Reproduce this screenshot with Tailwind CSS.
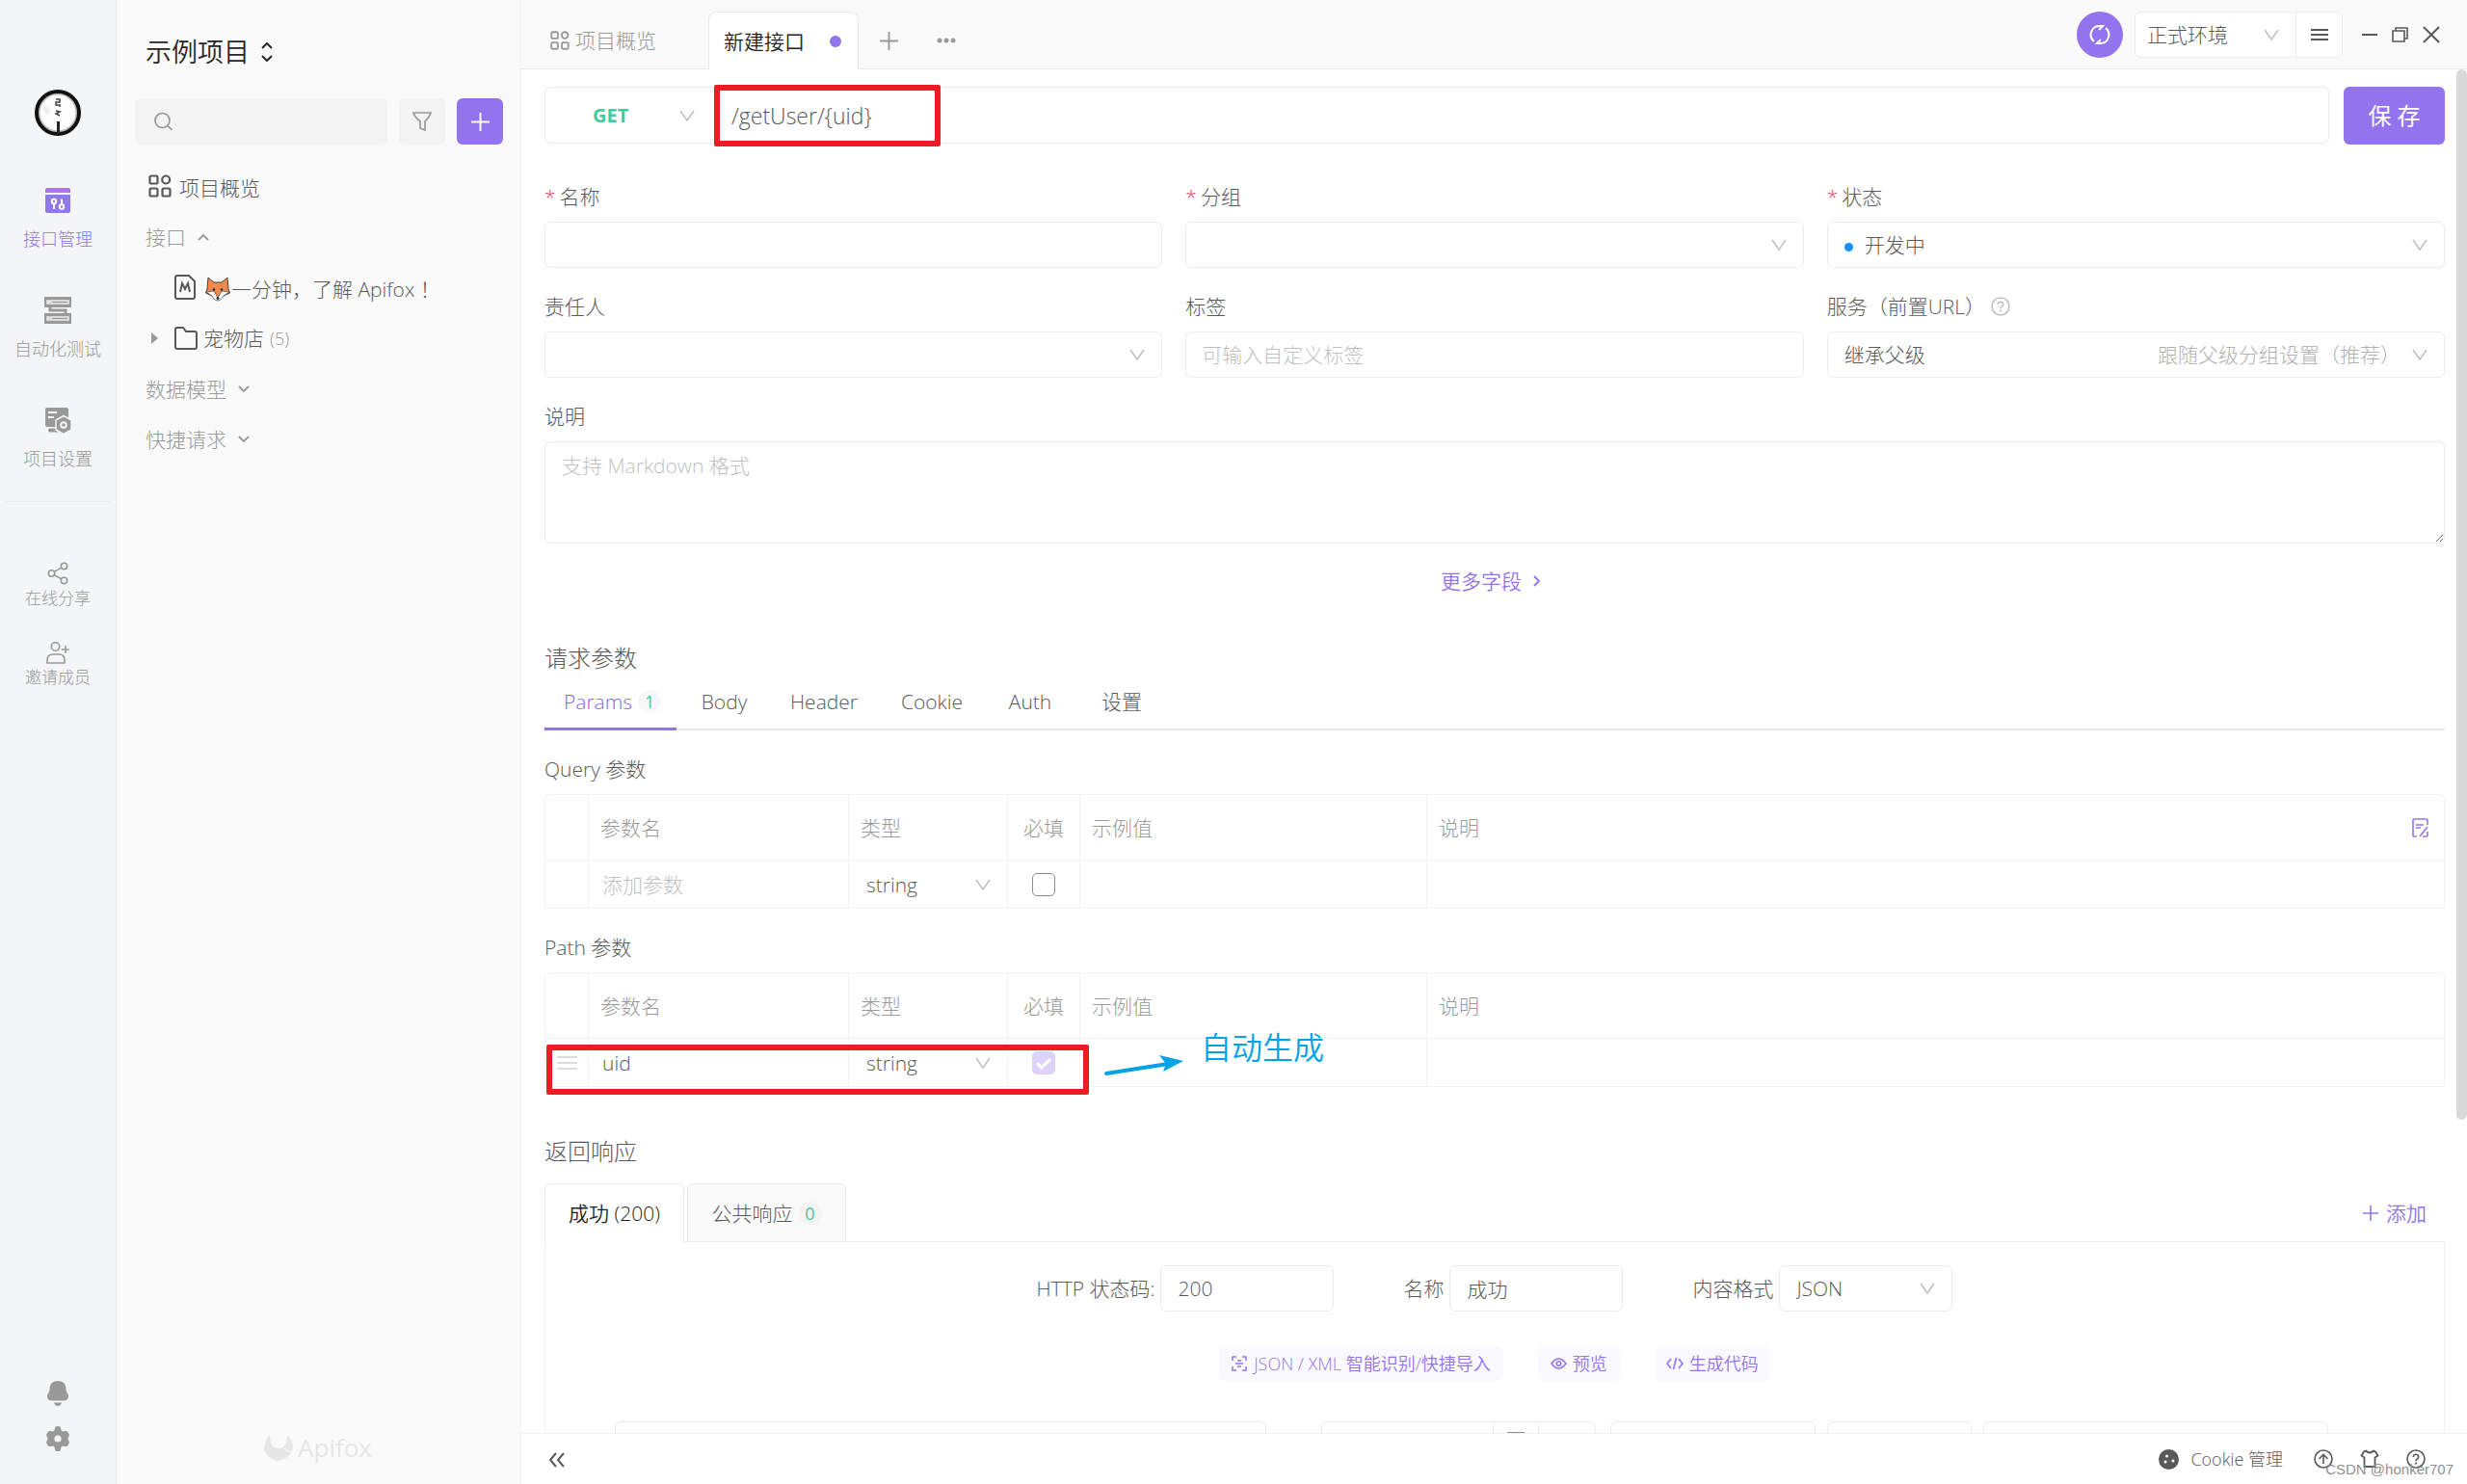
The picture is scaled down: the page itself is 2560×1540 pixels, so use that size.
<!DOCTYPE html>
<html lang="zh-CN">
<head>
<meta charset="utf-8">
<title>Apifox - 新建接口</title>
<script src="https://cdn.jsdelivr.net/npm/@tailwindcss/browser@4"></script>
</head>
<body class="h-screen flex overflow-hidden bg-white text-[#595959] text-[21px] leading-8 font-light font-['Open_Sans','Noto_Sans_CJK_SC',sans-serif]">

<svg class="hidden">
  <symbol id="down" viewBox="0 0 16 12"><path d="M1 1l7 10 7-10" fill="none" stroke="currentColor" stroke-width="1.5"/></symbol>
  <symbol id="caret" viewBox="0 0 12 8"><path d="M1 1l5 5 5-5" fill="none" stroke="currentColor" stroke-width="1.8"/></symbol>
  <symbol id="grid" viewBox="0 0 24 24"><g fill="none" stroke="currentColor" stroke-width="2.2"><rect x="1.5" y="1.5" width="8" height="8" rx="1.5"/><circle cx="18.2" cy="5.5" r="4"/><rect x="1.5" y="14.5" width="8" height="8" rx="1.5"/><rect x="14.5" y="14.5" width="8" height="8" rx="1.5"/></g></symbol>
  <symbol id="plus" viewBox="0 0 20 20"><path d="M10 0v20M0 10h20" fill="none" stroke="currentColor" stroke-width="2"/></symbol>
  <symbol id="help" viewBox="0 0 20 20"><g fill="none" stroke="currentColor" stroke-width="1.6"><circle cx="10" cy="10" r="9"/><path d="M7.3 8c0-3.6 5.4-3.6 5.4 0 0 2-2.7 2-2.7 4.2"/></g><circle cx="10" cy="14.6" r="1.1" fill="currentColor"/></symbol>
</svg>

<nav class="w-[121px] shrink-0 flex flex-col items-center bg-[#f3f5f7] border-r border-[#ebedf0] text-[#999] text-lg leading-6">
  <svg class="mt-[93px] w-12 h-12" viewBox="0 0 48 48">
    <circle cx="24" cy="24" r="21" fill="#fdfdfd" stroke="#bbb" stroke-width="5"/>
    <circle cx="24" cy="24" r="22" fill="none" stroke="#111" stroke-width="4"/>
    <path d="M8 20q4-5 8 1-3 8-8-1" fill="#eee"/>
    <path d="M22 10h4v3h-4v3h4v2M22 22l4 1-4 2 4 2" fill="none" stroke="#444" stroke-width="1.500"/>
    <path d="M23 33h3v13h-3z" fill="#222"/>
  </svg>
  <a href="#" class="mt-[53px] flex flex-col items-center gap-[14px] text-[#9373ee]">
    <svg class="w-7 h-7" viewBox="0 0 28 28"><path d="M1 6V3a2 2 0 0 1 2-2h22a2 2 0 0 1 2 2v3z" fill="#b070fb"/><path d="M1 8h26v17a2 2 0 0 1-2 2H3a2 2 0 0 1-2-2z" fill="#9079ea"/><g fill="none" stroke="#fff" stroke-width="2"><circle cx="10" cy="15" r="2.2"/><path d="M10 17v6M18 12.500v6"/><circle cx="18" cy="20.500" r="2.2"/></g></svg>
    <span>接口管理</span>
  </a>
  <a href="#" class="mt-[48px] flex flex-col items-center gap-[14px]">
    <svg class="w-7 h-7" viewBox="0 0 28 28"><path d="M0 0h28v11H0zM0 17h28v11H0z" fill="#999"/><path d="M6 10v4h16v4" fill="none" stroke="#999" stroke-width="3"/><g fill="none" stroke="#f3f5f7" stroke-width="1.4"><rect x="3" y="4" width="2" height="3"/><rect x="7" y="4" width="18" height="3"/><rect x="3" y="21" width="2" height="3"/><rect x="7" y="21" width="18" height="3"/></g></svg>
    <span>自动化测试</span>
  </a>
  <a href="#" class="mt-[48px] flex flex-col items-center gap-[14px]">
    <svg class="w-7 h-7" viewBox="0 0 28 28"><path d="M1 3a2 2 0 0 1 2-2h20a2 2 0 0 1 2 2v15q-4 4-12 3H3a2 2 0 0 1-2-2z" fill="#999"/><path d="M4 6h9M4 11h6" stroke="#f3f5f7" stroke-width="1.8"/><path d="M6 24.500h8" stroke="#999" stroke-width="4" stroke-linecap="round"/><path d="M20 9.500l8 4.500v10l-8 4.500-8-4.500v-10z" fill="#999" stroke="#f3f5f7" stroke-width="1.5" stroke-linejoin="round"/><circle cx="20" cy="19" r="2.800" fill="none" stroke="#f3f5f7" stroke-width="2"/></svg>
    <span>项目设置</span>
  </a>
  <hr class="mt-8 w-[108px] border-[#e8eaec]">
  <a href="#" class="mt-[62px] flex flex-col items-center gap-[2px] text-[17px]">
    <svg class="w-6 h-6" viewBox="0 0 24 24" fill="none" stroke="#999" stroke-width="1.600"><circle cx="5.500" cy="12" r="3.200"/><circle cx="18.500" cy="4.500" r="3.200"/><circle cx="18.500" cy="19.500" r="3.200"/><path d="M8.300 10.400l7.400-4.300M8.300 13.600l7.400 4.300"/></svg>
    <span>在线分享</span>
  </a>
  <a href="#" class="mt-8 flex flex-col items-center gap-[2px] text-[17px]">
    <svg class="w-6 h-6" viewBox="0 0 24 24" fill="none" stroke="#999" stroke-width="1.600"><circle cx="9.500" cy="6" r="4.200"/><path d="M1 23v-3q0-6 6-6h6q6 0 6 6v3zM20 5v8M16 9h8"/></svg>
    <span>邀请成员</span>
  </a>
  <button class="mt-auto" aria-label="通知"><svg class="w-6 h-[26px]" viewBox="0 0 24 26" fill="#999"><path d="M12 0c6 0 8.500 4 8.500 8.500 0 4 2.500 4 2.500 7.500 0 3-2 4.500-4.500 4.500h-13C3 20.500 1 19 1 16c0-3.500 2.500-3.500 2.500-7.500C3.500 4 6 0 12 0zM8 22.500h8q-1 3.500-4 3.500t-4-3.500z"/></svg></button>
  <button class="mt-[21px] mb-[34px]" aria-label="设置"><svg class="w-6 h-[26px]" viewBox="0 0 24 26"><path d="M9 2q0-2 3-2t3 2q0 3 2 3.500 2-.8 4-.5 4 3 2.500 5.500-2 2.500 0 5Q25 18 21 21q-2 .3-4-.5-2 .5-2 3.500 0 2-3 2t-3-2q0-3-2-3.500-2 .8-4 .5-4-3-2.500-5.500 2-2.500 0-5Q-1 8 3 5q2-.3 4 .5Q9 5 9 2z" fill="#999"/><circle cx="12" cy="13" r="3.600" fill="#f3f5f7"/></svg></button>
</nav>

<aside class="w-[420px] shrink-0 flex flex-col bg-[#fafafa] border-r-2 border-[#f3f5f9]">
  <button class="ml-[30px] mt-9 flex items-center gap-3 text-[27px] leading-9 font-[350] text-[#262626]">示例项目
    <svg class="w-3 h-5" viewBox="0 0 12 20" fill="none" stroke="currentColor" stroke-width="2"><path d="M1 6l5-5 5 5M1 14l5 5 5-5"/></svg>
  </button>
  <div class="mt-[30px] ml-[19px] mr-[17px] flex gap-3">
    <label class="flex-1 min-w-0 h-12 pl-5 flex items-center gap-3 rounded-md bg-[#f3f3f3] text-[#999]">
      <svg class="w-[19px] h-5 shrink-0" viewBox="0 0 19 20" fill="none" stroke="currentColor" stroke-width="1.700"><circle cx="8.500" cy="9" r="7.500"/><path d="M14 14.500l4.500 4.500"/></svg>
      <input type="search" aria-label="搜索" class="flex-1 min-w-0 h-full outline-none">
    </label>
    <button aria-label="筛选" class="w-12 h-12 grid place-items-center rounded-md bg-[#f3f3f3] text-[#999]"><svg class="w-5 h-5" viewBox="0 0 20 20" fill="none" stroke="currentColor" stroke-width="1.700"><path d="M1 1h18q-1 4-6 9v9l-5-2v-7Q2 5 1 1z"/></svg></button>
    <button aria-label="新建" class="w-12 h-12 grid place-items-center rounded-md bg-[#9373ee] text-white"><svg class="w-[19px] h-[19px]"><use href="#plus"/></svg></button>
  </div>
  <div class="flex flex-col items-start pl-[30px] text-[#999]">
    <a href="#" class="mt-[29px] flex items-center text-[#595959]"><svg class="w-6 h-6 ml-[3px] mr-2 -mt-1"><use href="#grid"/></svg>项目概览</a>
    <button class="mt-[19px] flex items-center gap-3">接口<svg class="w-3 h-2 rotate-180"><use href="#caret"/></svg></button>
    <a href="#" class="mt-[22px] pl-[30px] flex items-center text-[#595959]">
      <svg class="w-[22px] h-[26px] mr-[10px] -mt-1" viewBox="0 0 22 26" fill="none" stroke="currentColor" stroke-width="2"><path d="M3 1h12l6 6v16a2 2 0 0 1-2 2H3a2 2 0 0 1-2-2V3a2 2 0 0 1 2-2z"/><path d="M6 18l2-9 3 6 3-6 2 9"/></svg>
      <svg class="w-[26px] h-[26px] mr-[1px]" viewBox="0 0 26 26"><path d="M3 1l6 5h8l6-5 1 12 1.500 4L19 20l-6 4-6-4-6.500-3L2 13z" fill="#f08a4b" stroke="#444" stroke-width="1"/><path d="M1 16l8-1 4 7 4-7 8 1-6 4-2 3q-4 4-8 0l-2-3z" fill="#fff" stroke="#444" stroke-width=".7"/><circle cx="9" cy="13.500" r="1.200" fill="#222"/><circle cx="17" cy="13.500" r="1.200" fill="#222"/><circle cx="13" cy="22.500" r="1.500" fill="#333"/></svg>
      一分钟，了解 Apifox ！</a>
    <a href="#" class="mt-[19px] pl-[5px] flex items-center text-[#595959]">
      <svg class="w-[7px] h-3 ml-[1px] mr-[17px]" viewBox="0 0 7 12"><path d="M0 0l7 6-7 6z" fill="#999"/></svg>
      <svg class="w-6 h-6 mr-[6px]" viewBox="0 0 24 24" fill="none" stroke="currentColor" stroke-width="2"><path d="M1 3a2 2 0 0 1 2-2h6l3 4h9a2 2 0 0 1 2 2v14a2 2 0 0 1-2 2H3a2 2 0 0 1-2-2z"/></svg>
      宠物店<span class="ml-[6px] text-lg text-[#999]">(5)</span></a>
    <button class="mt-[21px] flex items-center gap-3">数据模型<svg class="w-3 h-2"><use href="#caret"/></svg></button>
    <button class="mt-5 flex items-center gap-3">快捷请求<svg class="w-3 h-2"><use href="#caret"/></svg></button>
  </div>
  <div class="mt-auto mb-[18px] flex items-center justify-center gap-[5px] text-[#e6e6e6] text-[26px] leading-10 font-medium">
    <svg class="w-[30px] h-7" viewBox="0 0 30 28"><path d="M6 1q0 14 9 14T24 1q8 7 5 17-5 9-16 10-10-3-13-12Q1 5 6 1z" fill="currentColor"/><path d="M20 15l3 1 1 2 5 1" stroke="#fafafa" fill="none"/></svg>Apifox
  </div>
</aside>

<div class="flex-1 min-w-0 flex flex-col">
  <header class="h-[72px] shrink-0 flex items-start pt-3 pl-[25px] pr-7 bg-[#fafafa] shadow-[inset_0_-1px_0_#e9e9ed]">
    <a href="#" class="h-[60px] w-[169px] pl-[5px] flex items-center gap-[6px] text-[#999]"><svg class="w-5 h-5"><use href="#grid"/></svg>项目概览</a>
    <a href="#" class="h-[60px] w-[156px] px-[15px] flex items-center justify-between rounded-t-lg border border-b-0 border-[#e9e9ed] bg-white text-[#1f1f1f] font-[350]">新建接口<span class="w-3 h-3 mr-[2px] rounded-full bg-[#9373ee]"></span></a>
    <button aria-label="新标签" class="ml-[22px] mt-[21px] text-[#999]"><svg class="w-[19px] h-[19px]"><use href="#plus"/></svg></button>
    <button aria-label="更多" class="ml-10 mt-[27px] text-[#999]"><svg class="w-5 h-[6px]" viewBox="0 0 20 6" fill="currentColor"><circle cx="3" cy="3" r="2.500"/><circle cx="10" cy="3" r="2.500"/><circle cx="17" cy="3" r="2.500"/></svg></button>
    <button aria-label="同步" class="ml-auto w-12 h-12 grid place-items-center rounded-full bg-[#9373ee]"><svg class="w-[22px] h-[22px]" viewBox="0 0 22 22" fill="none" stroke="#fff" stroke-width="2"><path d="M5 18A9 9 0 0 1 10 2h4l-4 4M17 4a9 9 0 0 1-5 16H8l4-4"/></svg></button>
    <div class="ml-3 w-[216px] h-12 flex items-center rounded-md border border-[#ebebeb] bg-white">
      <select aria-label="环境" class="w-[121px] ml-3 appearance-none outline-none"><option>正式环境</option></select>
      <svg class="w-4 h-3 mr-[17px] text-[#bfbfbf]"><use href="#down"/></svg>
      <button aria-label="环境管理" class="flex-1 h-full grid place-items-center border-l border-[#ebebeb]"><svg class="w-[18px] h-3" viewBox="0 0 18 12"><path d="M0 1h18M0 6h18M0 11h18" stroke="#595959" stroke-width="2"/></svg></button>
    </div>
    <div class="ml-5 mt-[14px] flex items-center gap-[15px]">
      <button aria-label="最小化"><svg class="w-4 h-5" viewBox="0 0 16 20"><path d="M0 10h16" stroke="#595959" stroke-width="2"/></svg></button>
      <button aria-label="还原"><svg class="w-[17px] h-5" viewBox="0 0 17 20" fill="none" stroke="#595959" stroke-width="1.600"><path d="M1 6h12v11H1zM4 6V3h12v11h-3"/></svg></button>
      <button aria-label="关闭"><svg class="w-[18px] h-5" viewBox="0 0 18 20"><path d="M1 2l16 16M17 2L1 18" stroke="#595959" stroke-width="2"/></svg></button>
    </div>
  </header>

  <div class="flex-1 min-h-0 flex">
  <main class="flex-1 min-w-0 overflow-hidden pt-[18px] pl-6 pr-3">
    <div class="flex gap-[15px]">
      <div class="relative flex-1 h-[59px] flex items-center rounded-md border border-[#ebebeb]">
        <select aria-label="请求方法" class="w-[139px] pl-[49px] appearance-none outline-none font-bold text-xl text-[#3fcc9d]"><option>GET</option></select>
        <svg class="w-4 h-3 text-[#bfbfbf]"><use href="#down"/></svg>
        <input aria-label="接口路径" value="/getUser/{uid}" class="flex-1 h-full pl-[38px] outline-none text-[23px]">
        <div class="absolute -top-[3px] left-[175px] w-[235px] h-16 rounded-xs border-[6px] border-[#ed1c24] pointer-events-none"></div>
      </div>
      <button class="w-[105px] h-[60px] rounded-md bg-[#9373ee] text-white text-2xl font-normal">保 存</button>
    </div>

    <form class="mt-[38px] grid grid-cols-3 gap-6">
      <div class="flex flex-col gap-[10px]">
        <label for="name"><span class="mr-1 text-[#e8395c]">*</span>名称</label>
        <input id="name" class="h-12 px-4 rounded-md border border-[#ebebeb] outline-none">
      </div>
      <div class="flex flex-col gap-[10px]">
        <label for="group"><span class="mr-1 text-[#e8395c]">*</span>分组</label>
        <div class="h-12 pr-[17px] flex items-center rounded-md border border-[#ebebeb]"><select id="group" class="flex-1 pl-4 appearance-none outline-none"><option></option></select><svg class="w-4 h-3 text-[#bfbfbf]"><use href="#down"/></svg></div>
      </div>
      <div class="flex flex-col gap-[10px]">
        <label for="status"><span class="mr-1 text-[#e8395c]">*</span>状态</label>
        <div class="h-12 pl-[17px] pr-[17px] flex items-center rounded-md border border-[#ebebeb]"><span class="w-[9px] h-[9px] mt-1 rounded-full bg-[#1890ff]"></span><select id="status" class="flex-1 pl-3 appearance-none outline-none"><option>开发中</option></select><svg class="w-4 h-3 text-[#bfbfbf]"><use href="#down"/></svg></div>
      </div>
      <div class="flex flex-col gap-[10px]">
        <label for="owner">责任人</label>
        <div class="h-12 pr-[17px] flex items-center rounded-md border border-[#ebebeb]"><select id="owner" class="flex-1 pl-4 appearance-none outline-none"><option></option></select><svg class="w-4 h-3 text-[#bfbfbf]"><use href="#down"/></svg></div>
      </div>
      <div class="flex flex-col gap-[10px]">
        <label for="tags">标签</label>
        <input id="tags" placeholder="可输入自定义标签" class="h-12 px-4 rounded-md border border-[#ebebeb] outline-none placeholder:text-[#bfbfbf]">
      </div>
      <div class="flex flex-col gap-[10px]">
        <label for="service" class="flex items-center">服务（前置URL）<svg class="w-5 h-5 ml-[6px] text-[#bfbfbf]"><use href="#help"/></svg></label>
        <div class="h-12 pr-[17px] flex items-center rounded-md border border-[#ebebeb]"><select id="service" class="flex-1 pl-[17px] appearance-none outline-none"><option>继承父级</option></select><span class="mr-3 text-[#b0b0b0]">跟随父级分组设置（推荐）</span><svg class="w-4 h-3 text-[#bfbfbf]"><use href="#down"/></svg></div>
      </div>
      <div class="col-span-3 flex flex-col gap-[10px]">
        <label for="desc">说明</label>
        <textarea id="desc" placeholder="支持 Markdown 格式" class="h-[106px] px-[17px] py-2 rounded-md border border-[#ebebeb] outline-none resize-y placeholder:text-[#bfbfbf]"></textarea>
      </div>
    </form>
    <div class="mt-[23px] flex justify-center"><button class="pr-2 flex items-center gap-3 text-[#9373ee] font-[350]">更多字段<svg class="w-2 h-3" viewBox="0 0 8 12"><path d="M1 1l5 5-5 5" fill="none" stroke="currentColor" stroke-width="1.800"/></svg></button></div>

    <h2 class="mt-[46px] text-2xl leading-9 font-light">请求参数</h2>
    <nav class="h-[57px] flex gap-[6px] shadow-[inset_0_-2px_0_#e8e8e8]">
      <a href="#" class="w-[137px] pl-5 flex items-center gap-[6px] border-b-3 border-[#9373ee] text-[#8562ec]">Params<span class="w-6 h-6 grid place-items-center rounded-full bg-[#f7f7f7] text-lg leading-6 font-normal text-[#3fcc9d]">1</span></a>
      <a href="#" class="w-[87px] pb-[3px] flex items-center justify-center">Body</a>
      <a href="#" class="w-[108px] pb-[3px] flex items-center justify-center">Header</a>
      <a href="#" class="w-[104px] pb-[3px] flex items-center justify-center">Cookie</a>
      <a href="#" class="w-[88px] pb-[3px] flex items-center justify-center">Auth</a>
      <a href="#" class="w-[90px] pb-[3px] flex items-center justify-center">设置</a>
    </nav>

    <h3 class="mt-6 font-light">Query 参数</h3>
    <div class="mt-[10px] rounded-t-md border border-[#f2f2f2]">
      <table class="w-full table-fixed border-separate border-spacing-0">
        <colgroup><col class="w-[45px]"><col class="w-[270px]"><col class="w-[165px]"><col class="w-[75px]"><col class="w-[360px]"><col></colgroup>
        <thead class="text-left text-[#999]">
          <tr class="h-[68px]">
            <th class="border-r border-b border-[#f2f2f2]"></th>
            <th class="border-r border-b border-[#f2f2f2] px-3 font-light">参数名</th>
            <th class="border-r border-b border-[#f2f2f2] px-3 font-light">类型</th>
            <th class="border-r border-b border-[#f2f2f2] text-center font-light">必填</th>
            <th class="border-r border-b border-[#f2f2f2] px-3 font-light">示例值</th>
            <th class="border-b border-[#f2f2f2] pl-3 pr-4 font-light"><div class="flex items-center justify-between">说明<button aria-label="批量编辑"><svg class="w-[17px] h-5" viewBox="0 0 17 20" fill="none" stroke="#9373ee" stroke-width="1.600"><path d="M5 19H2a1 1 0 0 1-1-1V2a1 1 0 0 1 1-1h13a1 1 0 0 1 1 1v5M4 7h8M4 10h5M8 19l8-10M11 19h4a1 1 0 0 0 1-1v-4"/></svg></button></div></th>
          </tr>
        </thead>
        <tbody>
          <tr class="h-[49px]">
            <td class="border-r border-[#f2f2f2]"></td>
            <td class="border-r border-[#f2f2f2] p-0"><input aria-label="参数名" placeholder="添加参数" class="w-full pl-[14px] outline-none placeholder:text-[#bfbfbf]"></td>
            <td class="border-r border-[#f2f2f2] p-0"><div class="flex items-center pr-[17px]"><select aria-label="类型" class="flex-1 min-w-0 pl-[18px] appearance-none outline-none"><option>string</option></select><svg class="w-4 h-3 text-[#bfbfbf]"><use href="#down"/></svg></div></td>
            <td class="border-r border-[#f2f2f2] p-0"><input type="checkbox" aria-label="必填" class="block mx-auto w-6 h-6 appearance-none rounded-[5px] border border-[#8c8c8c]"></td>
            <td class="border-r border-[#f2f2f2]"></td>
            <td></td>
          </tr>
        </tbody>
      </table>
    </div>

    <h3 class="mt-6 font-light">Path 参数</h3>
    <div class="relative mt-[10px] rounded-t-md border border-[#f2f2f2]">
      <table class="w-full table-fixed border-separate border-spacing-0">
        <colgroup><col class="w-[45px]"><col class="w-[270px]"><col class="w-[165px]"><col class="w-[75px]"><col class="w-[360px]"><col></colgroup>
        <thead class="text-left text-[#999]">
          <tr class="h-[68px]">
            <th class="border-r border-b border-[#f2f2f2]"></th>
            <th class="border-r border-b border-[#f2f2f2] px-3 font-light">参数名</th>
            <th class="border-r border-b border-[#f2f2f2] px-3 font-light">类型</th>
            <th class="border-r border-b border-[#f2f2f2] text-center font-light">必填</th>
            <th class="border-r border-b border-[#f2f2f2] px-3 font-light">示例值</th>
            <th class="border-b border-[#f2f2f2] px-3 font-light">说明</th>
          </tr>
        </thead>
        <tbody>
          <tr class="h-[49px]">
            <td class="border-r border-[#f2f2f2] p-0"><svg class="w-[21px] h-[14px] mx-auto" viewBox="0 0 21 14"><path d="M0 1h21M0 7h21M0 13h21" stroke="#dcdcdc" stroke-width="2"/></svg></td>
            <td class="border-r border-[#f2f2f2] p-0"><input aria-label="参数名" value="uid" class="w-full pl-[14px] outline-none"></td>
            <td class="border-r border-[#f2f2f2] p-0"><div class="flex items-center pr-[17px]"><select aria-label="类型" class="flex-1 min-w-0 pl-[18px] appearance-none outline-none"><option>string</option></select><svg class="w-4 h-3 text-[#bfbfbf]"><use href="#down"/></svg></div></td>
            <td class="border-r border-[#f2f2f2] p-0"><div class="w-6 h-6 mx-auto grid"><input type="checkbox" checked aria-label="必填" class="col-start-1 row-start-1 w-6 h-6 appearance-none rounded-[5px] bg-[#dcd2fa]"><svg class="col-start-1 row-start-1 w-6 h-6 pointer-events-none" viewBox="0 0 24 24"><path d="M5 12l5 5 9-9" fill="none" stroke="#fff" stroke-width="3"/></svg></div></td>
            <td class="border-r border-[#f2f2f2]"></td>
            <td></td>
          </tr>
        </tbody>
      </table>
      <div class="absolute top-[74px] left-[1px] w-[563px] h-[52px] rounded-xs border-[6px] border-[#ed1c24] pointer-events-none"></div>
      <svg class="absolute top-[84px] left-[579px] w-[84px] h-6" viewBox="0 0 84 24"><path d="M3 20l64-10" stroke="#00a2e8" stroke-width="4" stroke-linecap="round"/><path d="M58 1l25 6-21 11 3-8z" fill="#00a2e8"/></svg>
      <div class="absolute top-[57px] left-[680px] text-[32px] leading-10 font-[350] text-[#00a2e8]">自动生成</div>
    </div>

    <h2 class="mt-[49px] text-2xl leading-9 font-light">返回响应</h2>
    <div class="mt-[15px] h-[61px] flex shadow-[inset_0_-1px_0_#ebebeb]">
      <a href="#" class="w-[145px] flex items-center justify-center rounded-t-md border border-b-0 border-[#ebebeb] bg-white text-[#1f1f1f] font-[350]">成功 (200)</a>
      <a href="#" class="w-[165px] ml-[3px] flex items-center justify-center gap-[6px] rounded-t-md border border-[#ebebeb] bg-[#fafafa]">公共响应<span class="w-6 h-6 grid place-items-center rounded-full bg-[#f3f3f3] text-lg leading-6 font-normal text-[#3fcc9d]">0</span></a>
      <button class="ml-auto mr-[19px] flex items-center gap-2 text-[#9373ee] font-[350]"><svg class="w-4 h-4"><use href="#plus"/></svg>添加</button>
    </div>
    <section class="h-[300px] border-x border-[#f2f2f2] pt-6">
      <div class="flex justify-center gap-[72px]">
        <label class="flex items-center gap-[6px]">HTTP 状态码:<input value="200" class="w-[180px] h-12 px-[17px] rounded-md border border-[#ebebeb] outline-none"></label>
        <label class="flex items-center gap-[6px]">名称<input value="成功" class="w-[180px] h-12 px-[17px] rounded-md border border-[#ebebeb] outline-none"></label>
        <label class="flex items-center gap-[6px]">内容格式<span class="w-[180px] h-12 pr-[17px] flex items-center rounded-md border border-[#ebebeb]"><select class="flex-1 min-w-0 pl-[17px] appearance-none outline-none"><option>JSON</option></select><svg class="w-4 h-3 text-[#bfbfbf]"><use href="#down"/></svg></span></label>
      </div>
      <div class="mt-9 flex justify-center gap-9 text-lg text-[#9373ee] font-[350]">
        <button class="h-9 px-[13px] flex items-center gap-[7px] rounded-md bg-[#faf9ff]"><svg class="w-4 h-4" viewBox="0 0 16 16" fill="none" stroke="currentColor" stroke-width="1.500"><path d="M1 5V1h4M11 1h4v4M15 11v4h-4M5 15H1v-4M6 5h4M4 8h8M6 11h4"/></svg>JSON / XML 智能识别/快捷导入</button>
        <button class="h-9 px-[13px] flex items-center gap-[6px] rounded-md bg-[#faf9ff]"><svg class="w-[17px] h-4" viewBox="0 0 17 16" fill="none" stroke="currentColor" stroke-width="1.600"><path d="M1 8q7.500-10 15 0-7.500 10-15 0z"/><circle cx="8.500" cy="8" r="2.200"/></svg>预览</button>
        <button class="h-9 px-3 flex items-center gap-[6px] rounded-md bg-[#faf9ff]"><svg class="w-[18px] h-4" viewBox="0 0 18 16" fill="none" stroke="currentColor" stroke-width="1.600"><path d="M5 3L1 8l4 5M13 3l4 5-4 5M10.500 2l-3 12"/></svg>生成代码</button>
      </div>
      <div class="mt-[42px] ml-[72px] mr-[120px] flex">
        <input aria-label="字段名" class="flex-1 h-12 rounded-md border border-[#ebebeb]">
        <div class="ml-[57px] w-[285px] h-12 flex rounded-md border border-[#ebebeb]">
          <input aria-label="字段类型" class="w-[177px]">
          <button aria-label="字段设置" class="w-12 pt-[10px] flex justify-center rounded-tr-md border-x border-[#ebebeb]"><svg class="w-[18px] h-5" viewBox="0 0 18 20"><path d="M0 1h18M0 8h18M0 15h18" stroke="#8c8c8c" stroke-width="2"/></svg></button>
        </div>
        <input aria-label="Mock" class="ml-[15px] w-[213px] h-12 rounded-md border border-[#ebebeb]">
        <input aria-label="中文名" class="ml-3 w-[150px] h-12 rounded-md border border-[#ebebeb]">
        <input aria-label="字段说明" class="ml-3 w-[358px] h-12 rounded-md border border-[#ebebeb]">
      </div>
    </section>
  </main>
  <div class="w-[11px] shrink-0"><div class="h-[77%] rounded-t-full rounded-b-full bg-[#d9d9d9]"></div></div>
  </div>

  <footer class="relative h-[53px] shrink-0 pl-7 pr-[43px] flex items-center border-t border-[#f0f0f0] text-lg text-[#595959]">
    <button aria-label="收起"><svg class="w-[17px] h-4 mt-[2px]" viewBox="0 0 17 16" fill="none" stroke="currentColor" stroke-width="2"><path d="M8 1L2 8l6 7M16 1l-6 7 6 7"/></svg></button>
    <button class="ml-auto flex items-center gap-3"><svg class="w-[21px] h-[21px]" viewBox="0 0 21 21"><circle cx="10.500" cy="10.500" r="10.500" fill="#595959"/><g fill="#fff"><circle cx="8.500" cy="7" r="1.500"/><circle cx="7" cy="13" r="1.500"/><circle cx="15" cy="12" r="1.500"/></g></svg>Cookie 管理</button>
    <button aria-label="更新" class="ml-8"><svg class="w-5 h-5" viewBox="0 0 20 20" fill="none" stroke="currentColor" stroke-width="1.600"><circle cx="10" cy="10" r="9"/><path d="M10 15V5.500M5.500 10L10 5.500l4.500 4.500"/></svg></button>
    <button aria-label="主题" class="ml-7"><svg class="w-5 h-5" viewBox="0 0 20 20" fill="none" stroke="currentColor" stroke-width="1.800"><path d="M6 1.500q4 4 8 0l2 1 2.500 4-3 2V18h-11V8.500l-3-2L4 2.500z"/></svg></button>
    <button aria-label="帮助" class="ml-7"><svg class="w-5 h-5"><use href="#help"/></svg></button>
    <div class="absolute right-[14px] bottom-[5px] text-[15px] leading-5 font-normal text-[#8f8f8f] font-['Liberation_Sans',sans-serif] pointer-events-none">CSDN @honker707</div>
  </footer>
</div>
</body>
</html>
